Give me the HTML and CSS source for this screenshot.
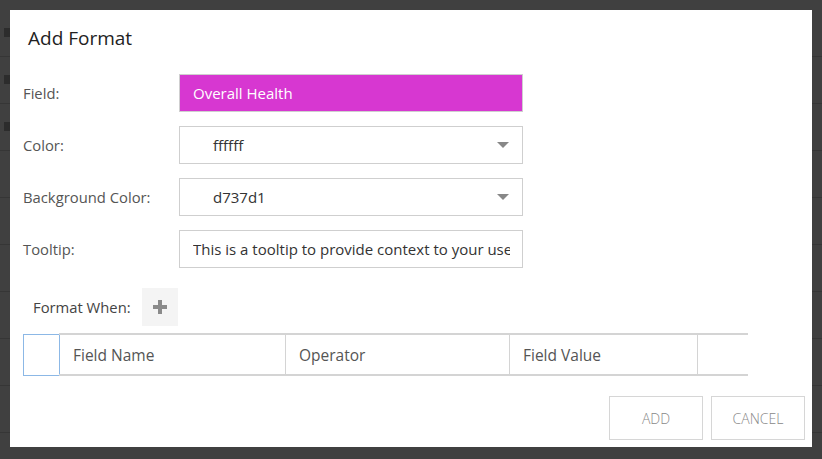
FILE: index.html
```html
<!DOCTYPE html>
<html>
<head>
    <title>Add Format</title>
    <link rel="stylesheet" href="styles.css">
</head>
<body>
    <div class="backdrop">
        <div class="bg-row"><span class="bg-icon"></span></div>
        <div class="bg-row"><span class="bg-icon"></span></div>
        <div class="bg-row"><span class="bg-icon"></span></div>
        <div class="bg-row"></div>
        <div class="bg-row"></div>
        <div class="bg-row"></div>
        <div class="bg-row"></div>
        <div class="bg-row"></div>
        <div class="bg-row"></div>
    </div>

    <div class="modal">
        <h2 class="modal-title">Add Format</h2>

        <div class="form-grid">
            <label>Field:</label>
            <div class="input field-input">Overall Health</div>

            <label>Color:</label>
            <div class="input select-input">
                <span>ffffff</span>
                <span class="caret"></span>
            </div>

            <label>Background Color:</label>
            <div class="input select-input">
                <span>d737d1</span>
                <span class="caret"></span>
            </div>

            <label for="tooltip">Tooltip:</label>
            <input id="tooltip" class="input text-input" type="text" value="This is a tooltip to provide context to your users">
        </div>

        <div class="format-when">
            <span>Format When:</span>
            <button class="add-btn" type="button">
                <svg width="16" height="16" viewBox="0 0 16 16">
                    <path d="M6 1h4v5h5v4h-5v5h-4v-5h-5v-4h5z" fill="#8a8a8a"/>
                </svg>
            </button>
        </div>

        <table class="cond-table">
            <tr>
                <th class="check-col"></th>
                <th class="name-col">Field Name</th>
                <th class="op-col">Operator</th>
                <th class="val-col">Field Value</th>
                <th class="last-col"></th>
            </tr>
        </table>

        <div class="actions">
            <button type="button">ADD</button>
            <button type="button">CANCEL</button>
        </div>
    </div>
</body>
</html>
```

FILE: styles.css
```css
body {
    margin: 0;
    padding: 0;
    background-color: #404040;
    font-family: "Open Sans", "Noto Sans", sans-serif;
    width: 822px;
    height: 459px;
    overflow: hidden;
    position: relative;
}
.backdrop {
    padding-top: 10px;
}
.bg-row {
    height: 46px;
    border-bottom: 1px solid #363636;
    position: relative;
}
.bg-icon {
    position: absolute;
    left: 4px;
    top: 18px;
    width: 7px;
    height: 9px;
    background-color: #2c2c2c;
}
.modal {
    position: absolute;
    left: 10px;
    top: 10px;
    width: 802px;
    height: 437px;
    background-color: #fff;
    box-sizing: border-box;
    padding: 13px 7px 0 13px;
}
.modal-title {
    margin: 0 0 0 5px;
    font-size: 19px;
    font-weight: 400;
    color: #222;
    line-height: 30px;
}
.form-grid {
    display: grid;
    grid-template-columns: 156px 344px;
    grid-auto-rows: 38px;
    row-gap: 14px;
    margin-top: 21px;
    align-items: center;
}
.form-grid label {
    font-size: 14.8px;
    color: #555;
}
.input {
    height: 38px;
    box-sizing: border-box;
    border: 1px solid #cfcfcf;
    display: flex;
    align-items: center;
    font-size: 15px;
    color: #333;
    white-space: nowrap;
    overflow: hidden;
}
.field-input {
    background-color: #d737d1;
    color: #fff;
    padding-left: 13px;
}
.select-input {
    padding-left: 33px;
    padding-right: 13px;
    justify-content: space-between;
}
.caret {
    width: 0;
    height: 0;
    border-left: 6px solid transparent;
    border-right: 6px solid transparent;
    border-top: 6px solid #888;
}
.text-input {
    width: 344px;
    margin: 0;
    padding: 0 12px 0 13px;
    font-family: "Open Sans", "Noto Sans", sans-serif;
    background-color: #fff;
    border-radius: 0;
    outline: none;
}
.format-when {
    display: flex;
    align-items: center;
    margin-top: 20px;
    padding-left: 10px;
    font-size: 14.8px;
    color: #444;
}
.add-btn {
    margin-left: 11px;
    width: 36px;
    height: 38px;
    border: none;
    background-color: #f4f4f4;
    display: flex;
    align-items: center;
    justify-content: center;
    padding: 0;
}
.cond-table {
    margin-top: 7px;
    border-collapse: collapse;
    width: 725px;
}
.cond-table th {
    height: 41px;
    box-sizing: border-box;
    border-top: 2px solid #d4d4d4;
    border-bottom: 2px solid #d4d4d4;
    border-left: 1px solid #d4d4d4;
    text-align: left;
    font-weight: 400;
    font-size: 15.5px;
    color: #555;
    padding: 0 0 0 13px;
}
.cond-table .check-col {
    width: 36px;
    padding: 0;
    border: 1px solid #8cb8e6;
}
.cond-table .name-col {
    width: 226px;
    border-left: none;
}
.cond-table .op-col {
    width: 224px;
}
.cond-table .val-col {
    width: 188px;
}
.actions {
    display: flex;
    justify-content: flex-end;
    gap: 8px;
    margin-top: 20px;
}
.actions button {
    width: 94px;
    height: 44px;
    background-color: #fff;
    border: 1px solid #d6d6d6;
    font-family: "Open Sans", "Noto Sans", sans-serif;
    font-size: 14px;
    font-weight: 300;
    color: #888;
}
```
